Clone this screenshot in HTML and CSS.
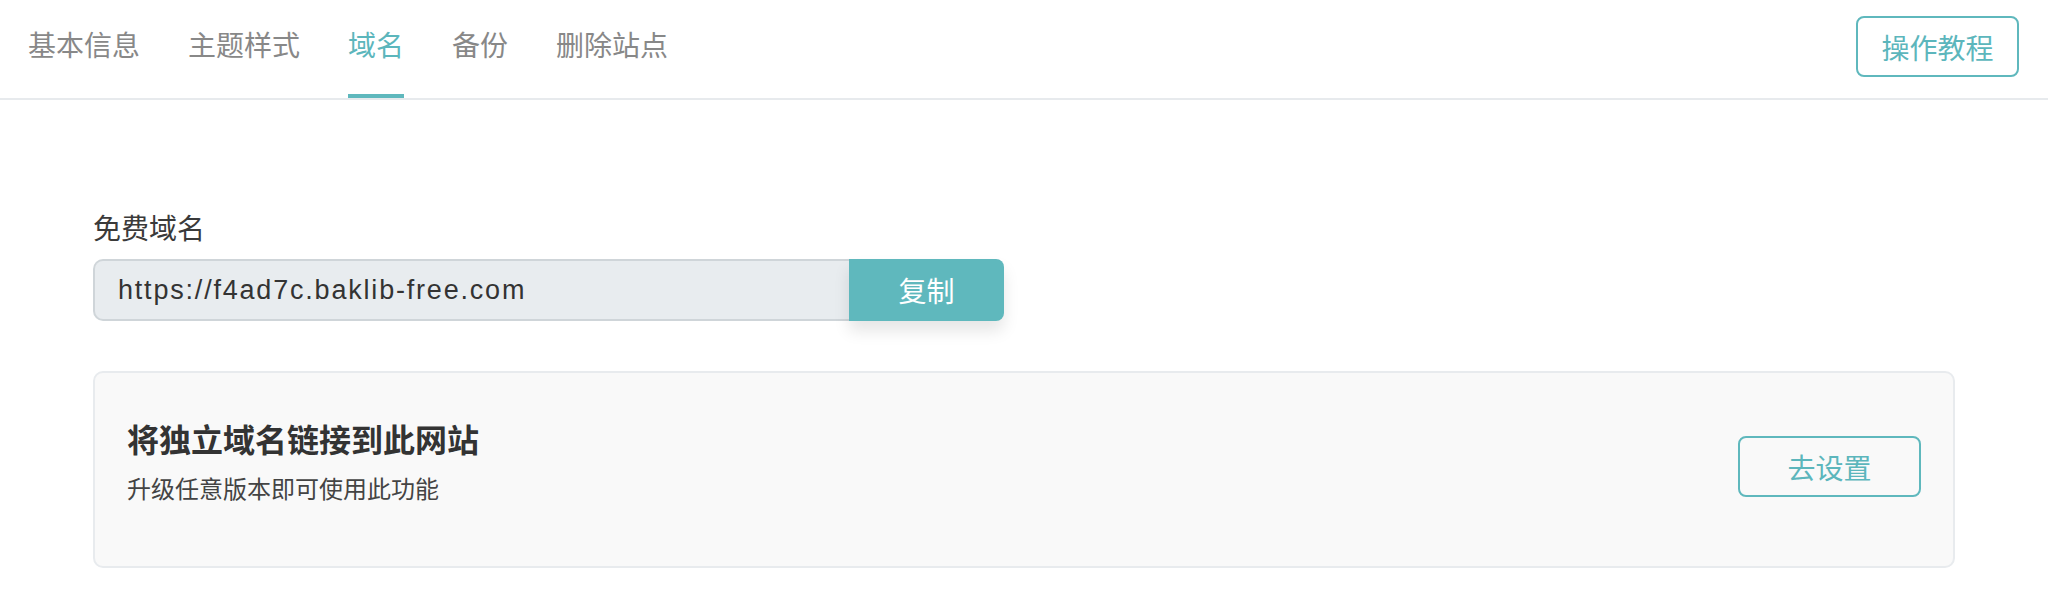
FILE: index.html
```html
<!DOCTYPE html>
<html lang="zh-CN">
<head>
<meta charset="utf-8">
<title>域名</title>
<link rel="stylesheet" href="styles.css">
</head>
<body>
<header class="topbar">
  <nav class="tabs">
    <a class="tab">基本信息</a>
    <a class="tab">主题样式</a>
    <a class="tab active">域名</a>
    <a class="tab">备份</a>
    <a class="tab">删除站点</a>
  </nav>
  <button class="btn-outline btn-guide">操作教程</button>
</header>
<main class="content">
  <div class="field-label">免费域名</div>
  <div class="copy-group">
    <div class="copy-input">https://f4ad7c.baklib-free.com</div>
    <button class="copy-btn">复制</button>
  </div>
  <section class="card">
    <div class="card-text">
      <h2 class="card-title">将独立域名链接到此网站</h2>
      <p class="card-sub">升级任意版本即可使用此功能</p>
    </div>
    <button class="btn-outline btn-setup">去设置</button>
  </section>
</main>
</body>
</html>
```

FILE: styles.css
```css
* { box-sizing: border-box; }
html, body {
  margin: 0;
  padding: 0;
  background: #ffffff;
  font-family: "Noto Sans CJK SC", "Noto Sans", sans-serif;
  color: #333333;
}
.topbar {
  display: flex;
  justify-content: space-between;
  align-items: flex-start;
  height: 100px;
  border-bottom: 2px solid #e7eaed;
  padding: 0 29px 0 28px;
}
.tabs {
  display: flex;
  gap: 48px;
  height: 98px;
}
.tab {
  display: block;
  height: 98px;
  padding-top: 24px;
  font-size: 28px;
  line-height: 40px;
  color: #888888;
  border-bottom: 4px solid transparent;
  cursor: pointer;
}
.tab.active {
  color: #5cb6bc;
  border-bottom-color: #5fb8bd;
}
.btn-outline {
  font-family: "Noto Sans CJK SC", "Noto Sans", sans-serif;
  font-size: 28px;
  line-height: 40px;
  color: #5cb6bc;
  background: #ffffff;
  border: 2px solid #5fb8bd;
  border-radius: 8px;
  padding: 0;
  cursor: pointer;
}
.btn-guide {
  margin-top: 16px;
  width: 163px;
  height: 61px;
}
.content {
  padding: 107px 93px 0 93px;
}
.field-label {
  font-size: 28px;
  line-height: 40px;
  color: #3a3a3a;
  margin-bottom: 12px;
}
.copy-group {
  display: flex;
  width: 911px;
  height: 62px;
}
.copy-input {
  flex: 1;
  display: flex;
  align-items: center;
  padding-left: 23px;
  background: #e8ecef;
  border: 2px solid #cfd5d9;
  border-right: none;
  border-radius: 10px 0 0 10px;
  font-family: "Liberation Sans", Arial, sans-serif;
  font-size: 27px;
  letter-spacing: 1.8px;
  color: #333333;
}
.copy-btn {
  width: 155px;
  height: 62px;
  border: none;
  border-radius: 0 8px 8px 0;
  background: #5fb8bd;
  color: #ffffff;
  font-family: "Noto Sans CJK SC", "Noto Sans", sans-serif;
  font-size: 28px;
  line-height: 40px;
  padding: 0;
  box-shadow: 0 10px 16px rgba(0, 0, 0, 0.10);
}
.card {
  margin-top: 50px;
  height: 197px;
  display: flex;
  justify-content: space-between;
  align-items: center;
  padding: 0 32px;
  background: #f9f9f9;
  border: 2px solid #e8ebee;
  border-radius: 10px;
}
.card-text {
  padding-bottom: 17px;
}
.card-title {
  margin: 0 0 10px 0;
  font-size: 32px;
  line-height: 44px;
  font-weight: 700;
  color: #333333;
}
.card-sub {
  margin: 0;
  font-size: 24px;
  line-height: 36px;
  color: #444444;
}
.btn-setup {
  width: 183px;
  height: 61px;
  margin-bottom: 6px;
  background: transparent;
}
```
